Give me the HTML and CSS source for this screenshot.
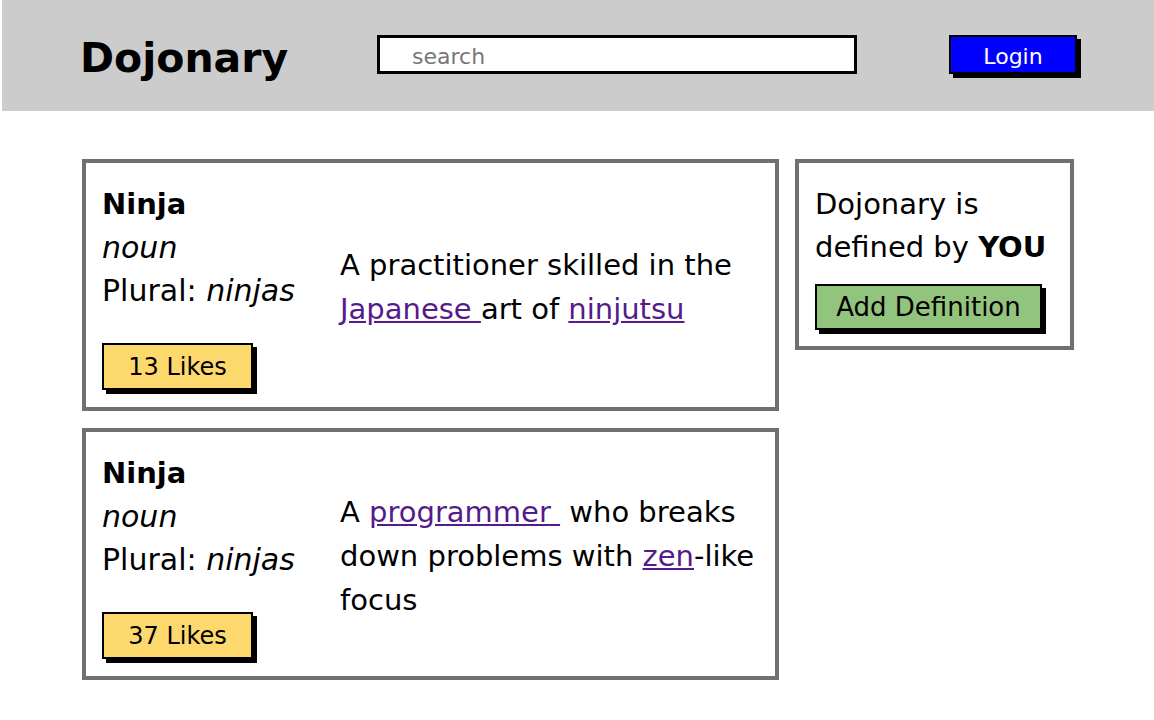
FILE: index.html
```html
<!DOCTYPE html>
<html lang="en">
<head>
<meta charset="utf-8">
<title>Dojonary</title>
<link rel="stylesheet" href="styles.css">
</head>
<body>
<header class="topbar">
  <div class="logo">Dojonary</div>
  <input class="search" type="text" placeholder="search">
  <button class="btn login">Login</button>
</header>
<main class="main">
  <section class="entries">
    <article class="card">
      <div class="word">
        <div class="term">Ninja</div>
        <div class="pos">noun</div>
        <div class="plural">Plural: <em>ninjas</em></div>
        <button class="btn likes">13 Likes</button>
      </div>
      <p class="def">A practitioner skilled in the <a href="#">Japanese </a>art of <a href="#">ninjutsu</a></p>
    </article>
    <article class="card">
      <div class="word">
        <div class="term">Ninja</div>
        <div class="pos">noun</div>
        <div class="plural">Plural: <em>ninjas</em></div>
        <button class="btn likes">37 Likes</button>
      </div>
      <p class="def">A <a href="#">programmer&nbsp;</a> who breaks down problems with <span class="nowrap"><a href="#">zen</a>-like</span> focus</p>
    </article>
  </section>
  <aside class="side">
    <p class="tagline">Dojonary is <span class="nowrap">defined by <strong>YOU</strong></span></p>
    <button class="btn add">Add Definition</button>
  </aside>
</main>
</body>
</html>
```

FILE: styles.css
```css
* { box-sizing: border-box; }
body {
  margin: 0;
  font-family: "Comic Sans MS", "DejaVu Sans", sans-serif;
  color: #000;
  background: #fff;
}
.nowrap { white-space: nowrap; }
.topbar {
  margin-left: 2px;
  height: 111px;
  background: #cccccc;
  display: flex;
  align-items: flex-start;
  padding: 35px 0 0 78px;
}
.logo {
  font-size: 41px;
  font-weight: bold;
  line-height: 44px;
  width: 204px;
  margin-top: 1px;
  white-space: nowrap;
}
.search {
  margin-left: 93px;
  width: 480px;
  height: 39px;
  border: 3px solid #000;
  background: #fff;
  padding: 3px 0 0 32px;
  font-family: inherit;
  font-size: 22px;
  color: #000;
  outline: none;
}
.search::placeholder { color: #777; }
.btn {
  font-family: inherit;
  border: 2px solid #000;
  box-shadow: 4px 4px 0 #000;
  padding: 0;
  cursor: pointer;
  color: #000;
}
.login {
  margin-left: 92px;
  width: 128px;
  height: 39px;
  background: #0000ff;
  color: #fff;
  font-size: 22px;
  padding-top: 3px;
}
.main {
  display: flex;
  align-items: flex-start;
  gap: 16px;
  padding: 48px 0 0 82px;
}
.entries {
  width: 697px;
  display: flex;
  flex-direction: column;
  gap: 17px;
}
.card {
  border: 4px solid #707070;
  display: flex;
  align-items: center;
  padding: 20px 4px 17px 16px;
  font-size: 30px;
  line-height: 43px;
}
.word {
  width: 238px;
  flex: none;
  display: flex;
  flex-direction: column;
  align-items: flex-start;
}
.term { font-weight: bold; font-size: 29px; }
.pos { font-style: italic; }
.likes {
  margin-top: 31px;
  width: 151px;
  height: 47px;
  background: #fdd96d;
  font-size: 24px;
}
.def {
  margin: 0;
  flex: 1;
  font-size: 29px;
  line-height: 44px;
}
.def a { color: #551a8b; text-decoration: underline; }
.side {
  width: 279px;
  border: 4px solid #707070;
  padding: 20px 8px 16px 16px;
  font-size: 29px;
  line-height: 43px;
}
.tagline { margin: 0; }
.add {
  margin-top: 15px;
  width: 227px;
  height: 46px;
  background: #93c47d;
  font-size: 26px;
}
```
